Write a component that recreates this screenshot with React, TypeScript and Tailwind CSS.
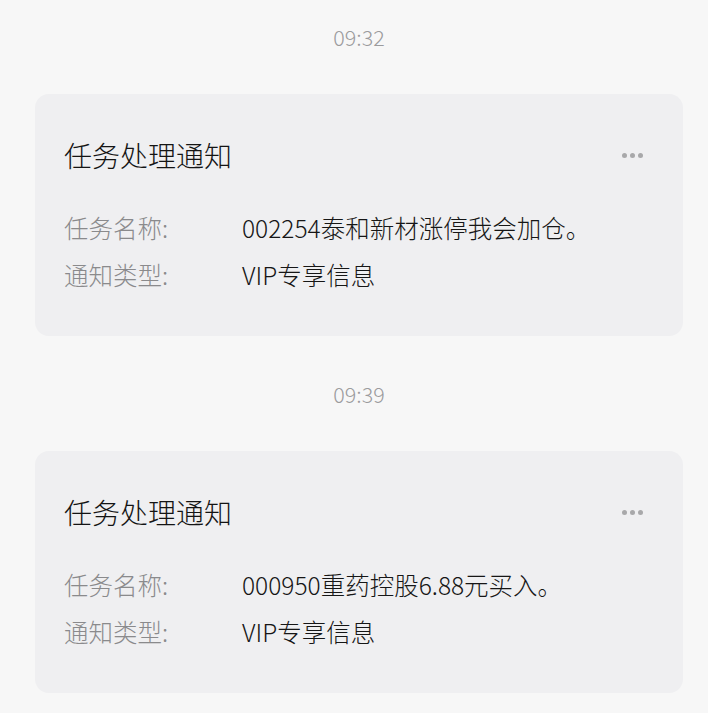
const font = { fontFamily: '"Noto Sans CJK SC", "Noto Sans", sans-serif' };

type Notice = { time: string; name: string; type: string };

const notices: Notice[] = [
  { time: "09:32", name: "002254泰和新材涨停我会加仓。", type: "VIP专享信息" },
  { time: "09:39", name: "000950重药控股6.88元买入。", type: "VIP专享信息" },
];

function MoreDots() {
  return (
    <div className="mr-[11px] flex items-center gap-[3px]">
      <span className="h-[5px] w-[5px] rounded-full bg-[#a8a8aa]" />
      <span className="h-[5px] w-[5px] rounded-full bg-[#a8a8aa]" />
      <span className="h-[5px] w-[5px] rounded-full bg-[#a8a8aa]" />
    </div>
  );
}

function NoticeCard({ notice }: { notice: Notice }) {
  return (
    <div className="rounded-[14px] bg-[#efeff1] px-[29px] pb-[37px] pt-[47px]">
      <div className="flex h-[28px] items-center justify-between">
        <h2 className="text-[28px] font-light leading-[28px] text-[#141414]">任务处理通知</h2>
        <MoreDots />
      </div>
      <div className="mt-[36px] text-[24.5px] font-light">
        <div className="flex h-[47px] items-center">
          <span className="w-[178px] text-[#8a8a8c]">任务名称:</span>
          <span className="text-[#161616]">{notice.name}</span>
        </div>
        <div className="flex h-[47px] items-center">
          <span className="w-[178px] text-[#8a8a8c]">通知类型:</span>
          <span className="text-[#161616]">{notice.type}</span>
        </div>
      </div>
    </div>
  );
}

export default function App() {
  return (
    <div className="min-h-[713px] bg-[#f7f7f7] pl-[35px] pr-[25px] pt-[26px]" style={font}>
      {notices.map((n, i) => (
        <div key={n.time} className={i > 0 ? "mt-[47px]" : ""}>
          <div className="h-[22px] text-center text-[21.5px] font-light leading-[22px] text-[#9b9b9d]">
            {n.time}
          </div>
          <div className="mt-[46px]">
            <NoticeCard notice={n} />
          </div>
        </div>
      ))}
    </div>
  );
}
